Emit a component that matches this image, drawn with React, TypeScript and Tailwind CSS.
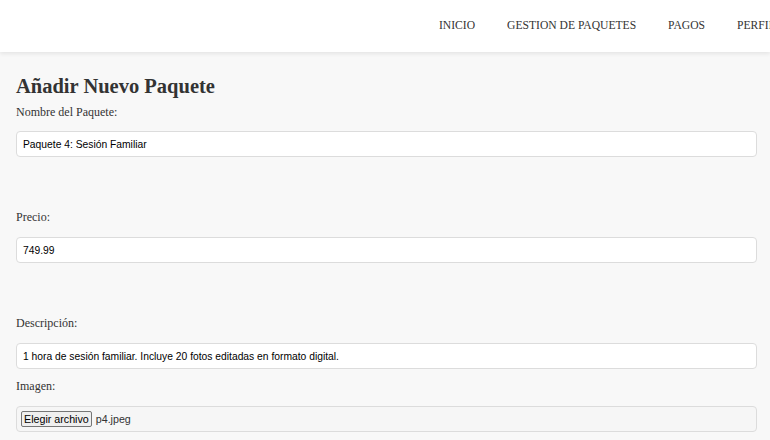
const navItems = ["INICIO", "GESTION DE PAQUETES", "PAGOS", "PERFIL"];

const fieldClass =
  "block w-full h-[26px] bg-white border border-[#dcdcdc] rounded-[4px] px-[6px] font-['Liberation_Sans',Arial,sans-serif] text-[10.3px] text-black outline-none";

const labelClass = "block text-[12px] leading-[14px] text-[#333]";

const App = () => {
  return (
    <div className="min-h-screen w-full overflow-hidden bg-[#f8f8f8] font-['Liberation_Serif','Times_New_Roman',serif] text-[#333]">
      <header className="h-[52px] bg-white shadow-[0_2px_4px_rgba(0,0,0,0.08)] flex items-center">
        <nav className="flex gap-8 pl-[439px] whitespace-nowrap text-[11.6px] text-[#333]">
          {navItems.map((item) => (
            <a key={item} href="#" className="no-underline">
              {item}
            </a>
          ))}
        </nav>
      </header>

      <main className="pl-4 pr-[13px] pt-[22px]">
        <h2 className="text-[20.5px] leading-[24px] font-bold text-[#333]">
          Añadir Nuevo Paquete
        </h2>

        <label className={labelClass + " mt-[7px]"}>Nombre del Paquete:</label>
        <input
          className={fieldClass + " mt-[12px]"}
          defaultValue="Paquete 4: Sesión Familiar"
        />

        <label className={labelClass + " mt-[53px]"}>Precio:</label>
        <input className={fieldClass + " mt-[13px]"} defaultValue="749.99" />

        <label className={labelClass + " mt-[53px]"}>Descripción:</label>
        <input
          className={fieldClass + " mt-[13px]"}
          defaultValue="1 hora de sesión familiar. Incluye 20 fotos editadas en formato digital."
        />

        <label className={labelClass + " mt-[10px]"}>Imagen:</label>
        <div className="mt-[13px] h-[26px] w-full border border-[#dcdcdc] rounded-[4px] bg-[#f6f6f6] flex items-center pl-[4px] gap-[4px] font-['Liberation_Sans',Arial,sans-serif] text-[10.7px] text-black">
          <button className="h-[16px] px-[2px] leading-[14px] border border-[#767676] rounded-[2px] bg-[#efefef] text-black">
            Elegir archivo
          </button>
          <span className="text-[#333]">p4.jpeg</span>
        </div>
      </main>
    </div>
  );
};

export default App;
